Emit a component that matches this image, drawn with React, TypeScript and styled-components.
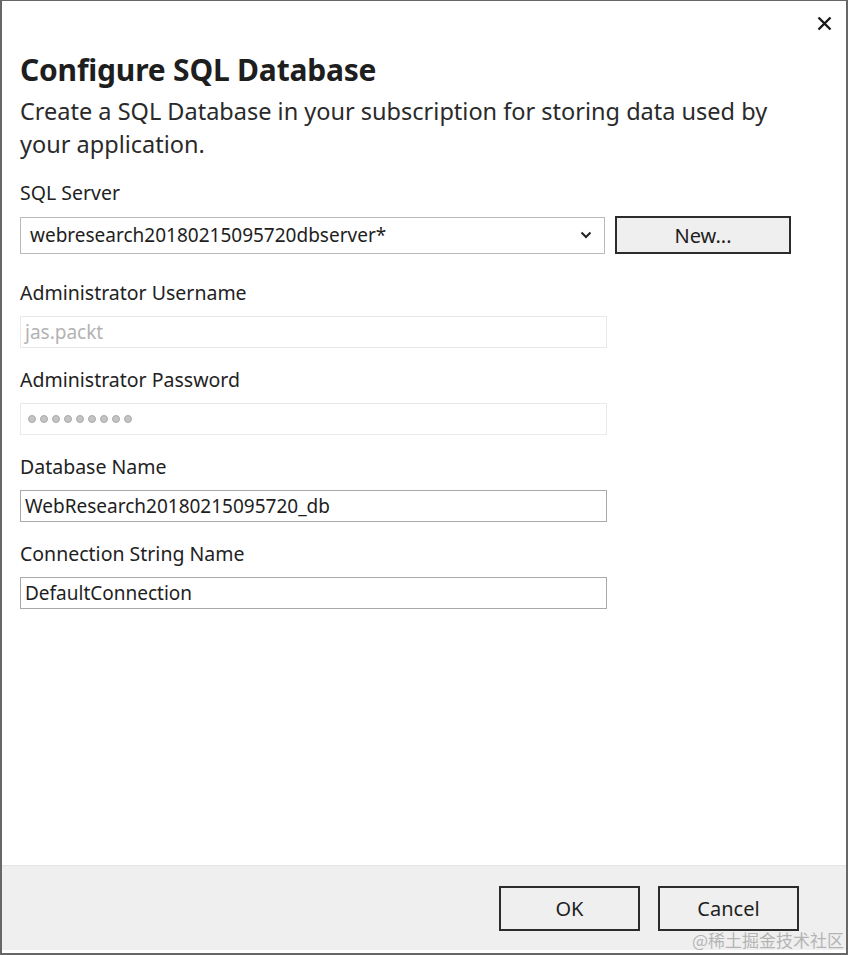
import React from "react";
import styled, { createGlobalStyle } from "styled-components";

const GlobalStyle = createGlobalStyle`
  html, body {
    margin: 0;
    padding: 0;
    background: #ffffff;
  }
  body {
    font-family: "Noto Sans", "Open Sans", "Liberation Sans", sans-serif;
    color: #1e1e1e;
  }
`;

function App() {
  return (
    <>
      <GlobalStyle />
      <Dialog>
        <TopBar>
          <CloseButton aria-label="Close">
            <svg width="15" height="15" viewBox="0 0 15 15">
              <path d="M1.5 1.5 L13.5 13.5 M13.5 1.5 L1.5 13.5" stroke="#1a1a1a" strokeWidth="2.4" fill="none" />
            </svg>
          </CloseButton>
        </TopBar>
        <Body>
          <Title>Configure SQL Database</Title>
          <Description>
            Create a SQL Database in your subscription for storing data used by your application.
          </Description>

          <Field $first>
            <Label>SQL Server</Label>
            <Row>
              <Select>
                <span>webresearch20180215095720dbserver*</span>
                <svg width="12" height="8" viewBox="0 0 12 8">
                  <path d="M1.5 1.5 L6 6 L10.5 1.5" stroke="#222" strokeWidth="2" fill="none" />
                </svg>
              </Select>
              <Button $width={176} $height={38}>New...</Button>
            </Row>
          </Field>

          <Field $afterSelect>
            <Label>Administrator Username</Label>
            <Input $disabled>jas.packt</Input>
          </Field>

          <Field>
            <Label>Administrator Password</Label>
            <Input $disabled>
              <Dots>
                {Array.from({ length: 9 }).map((_, i) => (
                  <Dot key={i} />
                ))}
              </Dots>
            </Input>
          </Field>

          <Field>
            <Label>Database Name</Label>
            <Input>WebResearch20180215095720_db</Input>
          </Field>

          <Field>
            <Label>Connection String Name</Label>
            <Input>DefaultConnection</Input>
          </Field>
        </Body>
        <Footer>
          <Button $width={141} $height={45}>OK</Button>
          <Button $width={141} $height={45}>Cancel</Button>
          <Watermark>@稀土掘金技术社区</Watermark>
        </Footer>
      </Dialog>
    </>
  );
}

export default App;

const Dialog = styled.div`
  width: 848px;
  height: 955px;
  box-sizing: border-box;
  border: 2px solid #676767;
  border-top-width: 1px;
  display: flex;
  flex-direction: column;
  background: #ffffff;
  overflow: hidden;
`;

const TopBar = styled.div`
  height: 49px;
  display: flex;
  justify-content: flex-end;
  align-items: flex-start;
`;

const CloseButton = styled.button`
  border: none;
  background: transparent;
  padding: 0;
  margin: 15px 14px 0 0;
  width: 15px;
  height: 15px;
  display: flex;
`;

const Body = styled.div`
  flex: 1;
  padding: 0 18px;
  display: flex;
  flex-direction: column;
`;

const Title = styled.h1`
  margin: 0 0 5px;
  font-size: 30px;
  font-weight: 700;
  line-height: 40px;
  color: #1e1e1e;
  letter-spacing: -0.2px;
`;

const Description = styled.p`
  margin: 0;
  width: 760px;
  font-size: 23.5px;
  line-height: 33px;
  color: #2a2a2a;
`;

const Field = styled.div<{ $first?: boolean; $afterSelect?: boolean }>`
  display: flex;
  flex-direction: column;
  margin-top: ${(p) => (p.$first ? 19 : p.$afterSelect ? 26 : 19)}px;
`;

const Label = styled.div`
  font-size: 19.5px;
  line-height: 26px;
  color: #222;
  margin-bottom: 10px;
`;

const Row = styled.div`
  display: flex;
  align-items: center;
  gap: 10px;
`;

const Select = styled.div`
  width: 585px;
  height: 37px;
  box-sizing: border-box;
  border: 1px solid #b9b9b9;
  padding: 0 12px 0 9px;
  display: flex;
  align-items: center;
  justify-content: space-between;
  font-size: 19px;
  color: #1e1e1e;
`;

const Input = styled.div<{ $disabled?: boolean }>`
  width: 587px;
  height: 32px;
  box-sizing: border-box;
  border: 1px solid ${(p) => (p.$disabled ? "#e9e9e9" : "#a9a9a9")};
  padding: 0 4px;
  display: flex;
  align-items: center;
  font-size: 19px;
  color: ${(p) => (p.$disabled ? "#b3b3b3" : "#1e1e1e")};
`;

const Dots = styled.span`
  display: flex;
  gap: 4px;
  padding-left: 3px;
`;

const Dot = styled.span`
  width: 8px;
  height: 8px;
  box-sizing: border-box;
  border-radius: 50%;
  background: #c4c4c4;
  border: 1px solid #a9a9a9;
`;

const Button = styled.button<{ $width: number; $height: number }>`
  width: ${(p) => p.$width}px;
  height: ${(p) => p.$height}px;
  box-sizing: border-box;
  border: 2px solid #2b2b2b;
  background: #efefef;
  font-family: inherit;
  font-size: 20px;
  color: #1e1e1e;
  padding: 0;
`;

const Footer = styled.div`
  position: relative;
  height: 85px;
  margin-bottom: 3px;
  background: #efefef;
  border-top: 1px solid #e4e4e4;
  display: flex;
  justify-content: flex-end;
  align-items: flex-start;
  gap: 18px;
  padding: 20px 47px 0 0;
  box-sizing: border-box;
`;

const Watermark = styled.div`
  position: absolute;
  right: 2px;
  bottom: -2px;
  font-family: "Noto Sans CJK SC", sans-serif;
  font-size: 17px;
  color: rgba(160, 160, 160, 0.75);
`;
